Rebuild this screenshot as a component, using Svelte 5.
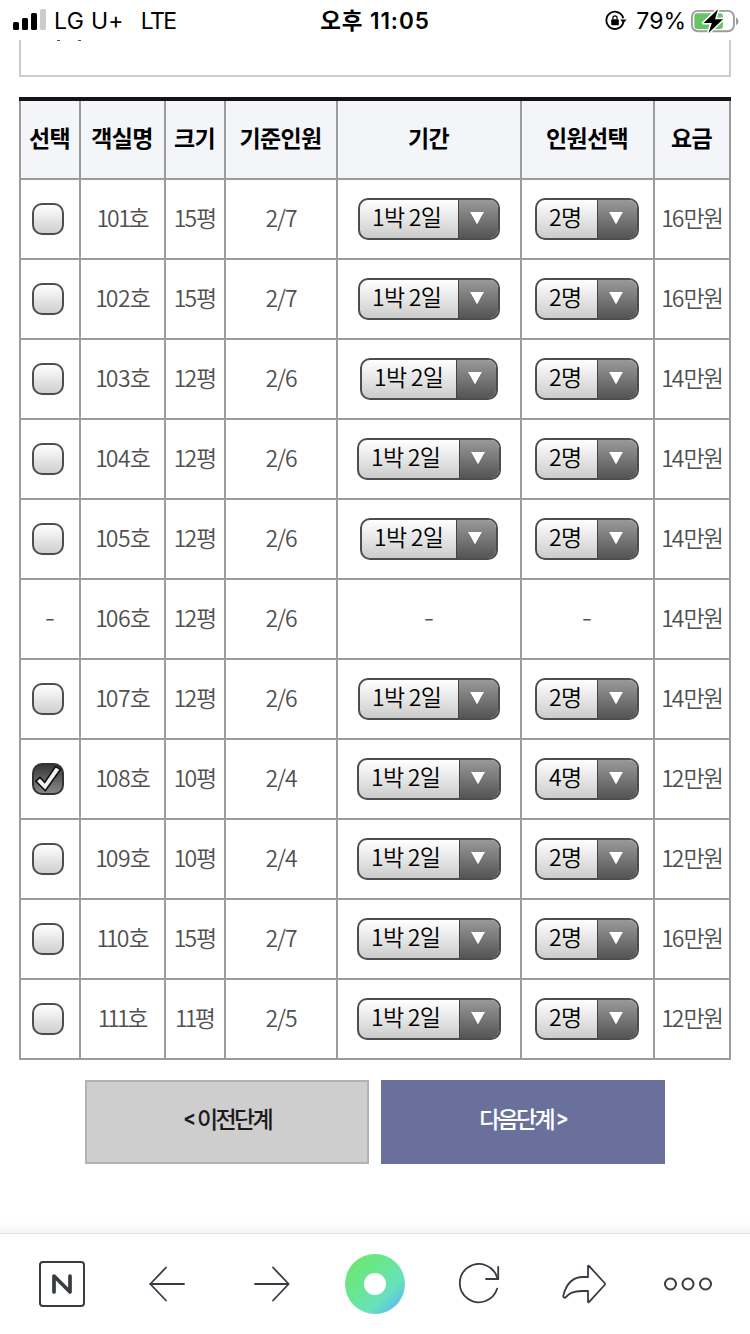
<script>
  const heads = ['선택', '객실명', '크기', '기준인원', '기간', '인원선택', '요금'];
  const rooms = [
    { no: '101', size: '15', cap: '2/7', w: 142, people: 2, price: '16' },
    { no: '102', size: '15', cap: '2/7', w: 142, people: 2, price: '16' },
    { no: '103', size: '12', cap: '2/6', w: 138, people: 2, price: '14' },
    { no: '104', size: '12', cap: '2/6', w: 144, people: 2, price: '14' },
    { no: '105', size: '12', cap: '2/6', w: 138, people: 2, price: '14' },
    { no: '106', size: '12', cap: '2/6', w: 0, people: 0, price: '14' },
    { no: '107', size: '12', cap: '2/6', w: 142, people: 2, price: '14' },
    { no: '108', size: '10', cap: '2/4', w: 144, people: 4, price: '12', checked: true },
    { no: '109', size: '10', cap: '2/4', w: 144, people: 2, price: '12' },
    { no: '110', size: '15', cap: '2/7', w: 144, people: 2, price: '16' },
    { no: '111', size: '11', cap: '2/5', w: 144, people: 2, price: '12' }
  ];
</script>

{#snippet label(digits, unit)}
  <span class="label">{#each digits as d}<span class:one={d === '1'}>{d}</span>{/each}<span class="unit">{unit}</span></span>
{/snippet}

{#snippet picker(text, width)}
  <div class="select" style:width="{width}px">
    <span class="value">{text}</span>
    <span class="drop"><svg width="14" height="14" viewBox="0 0 14 14"><path d="M0 1H14L7 13.5Z" fill="#444" opacity=".5"/><path d="M0 0H14L7 12.5Z" fill="#fff"/></svg></span>
  </div>
{/snippet}

<div class="screen">
  <header class="status">
    <div class="left">
      <svg width="34" height="22" viewBox="0 0 34 22">
        <rect x="0" y="13" width="6" height="8" rx="1.5"/>
        <rect x="9" y="9" width="6" height="12" rx="1.5"/>
        <rect x="18" y="4" width="6" height="17" rx="1.5"/>
        <rect x="27" y="0" width="6" height="21" rx="1.5" fill="#ccc"/>
      </svg>
      <span class="carrier">LG U+</span>
      <span class="net">LTE</span>
    </div>
    <div class="time">오후 11:05</div>
    <div class="right">
      <svg class="lock" width="22" height="22" viewBox="0 0 22 22">
        <path d="M18.3 12.5A8.6 8.6 0 1 1 18.3 8.2" fill="none" stroke="#000" stroke-width="1.8"/>
        <path d="M15.3 9.5H21.5L18.4 13.6Z"/>
        <rect x="6.2" y="9.3" width="7.6" height="6" rx="1"/>
        <path d="M7.9 9.5V7.9a2.1 2.1 0 0 1 4.2 0V9.5" fill="none" stroke="#000" stroke-width="1.2"/>
      </svg>
      <span class="pct">79%</span>
      <svg class="battery" width="49" height="24" viewBox="0 0 49 24">
        <rect x="1.9" y="1.9" width="42" height="20.4" rx="6" fill="#fff" stroke="#9c9c9c" stroke-width="1.9"/>
        <rect x="4.3" y="4.3" width="28.6" height="15.8" rx="3" fill="#65c466"/>
        <path d="M46 8.4q2.4 1 2.4 3.8t-2.4 3.8z" fill="#9c9c9c"/>
        <path d="M28 .3L13.6 13.9H21.8L18.5 24L33 10.2H25Z" stroke="#fff" stroke-width="3.2" paint-order="stroke" stroke-linejoin="round"/>
      </svg>
    </div>
  </header>

  <div class="notice"><i></i><i></i></div>

  <main>
    <div class="table">
      <div class="row head">
        {#each heads as h}<div class="cell">{h}</div>{/each}
      </div>
      {#each rooms as r}
        <div class="row">
          <div class="cell">
            {#if r.w}
              <div class="check" class:on={r.checked}>
                {#if r.checked}
                  <svg width="32" height="32" viewBox="0 0 32 32"><path d="M4 18.2L8 14.4L12.7 19.4L23.5 3.6L28.4 6.4L13.3 27.8Z" fill="#f2f2f2" stroke="#111" stroke-width="1.6"/></svg>
                {/if}
              </div>
            {:else}<span class="none">-</span>{/if}
          </div>
          <div class="cell">{@render label(r.no, '호')}</div>
          <div class="cell">{@render label(r.size, '평')}</div>
          <div class="cell cap">{r.cap}</div>
          <div class="cell">{#if r.w}{@render picker('1박 2일', r.w)}{:else}<span class="none">-</span>{/if}</div>
          <div class="cell people">{#if r.w}{@render picker(r.people + '명', 104)}{:else}<span class="none">-</span>{/if}</div>
          <div class="cell">{@render label(r.price, '만원')}</div>
        </div>
      {/each}
    </div>

    <div class="actions">
      <button class="prev"><b>&lt;</b>이전단계</button>
      <button class="next">다음단계<b>&gt;</b></button>
    </div>
  </main>

  <nav>
    <svg viewBox="0 0 60 60"><rect x="8" y="8" width="44" height="44" rx="3" stroke-width="2"/><path d="M22 38V22L38 38V22" stroke-width="3.7"/></svg>
    <svg viewBox="0 0 60 60"><path d="M47 30H13M29 13.5L13.3 30L29 46.5"/></svg>
    <svg viewBox="0 0 60 60"><path d="M13 30H46.5M31 13.5L46.7 30L31 46.5"/></svg>
    <svg viewBox="0 0 60 60">
      <defs><linearGradient id="orb" x1=".15" y1=".15" x2=".85" y2=".85"><stop offset="0" stop-color="#6be777"/><stop offset=".4" stop-color="#69e693"/><stop offset=".76" stop-color="#67e1bd"/><stop offset="1" stop-color="#5fc4e2"/></linearGradient></defs>
      <circle cx="30" cy="30" r="30" fill="url(#orb)" stroke="none"/><circle cx="30" cy="30" r="11" fill="#fff" stroke="none"/>
    </svg>
    <svg viewBox="0 0 60 60"><path d="M48.2 34.6A19.1 19.1 0 1 1 48.4 24.4"/><path d="M49.2 13V25H37" stroke-linejoin="miter"/></svg>
    <svg viewBox="0 0 60 60"><path d="M34 12.6Q34 11 35.2 12.2L50.6 29Q51.4 30 50.6 31L35.2 47.8Q34 49 34 47.4V37H28C19 37 15.5 39.5 12 43C10.5 44.5 9 43.5 9.3 41.6C12.5 29 20 23 29 23H34Z"/></svg>
    <svg viewBox="0 0 60 60"><g stroke-width="2"><circle cx="12.5" cy="30" r="5.5"/><circle cx="30" cy="30" r="5.5"/><circle cx="47.5" cy="30" r="5.5"/></g></svg>
  </nav>
</div>

<style>
  :global(body) { background: #fff; }
  * { box-sizing: border-box; }
  .screen { width: 750px; height: 1334px; display: flex; flex-direction: column; background: #fff; overflow: hidden; font-family: "Noto Sans CJK KR", sans-serif; }
  .status { height: 40px; flex: none; display: grid; grid-template-columns: 1fr 112px 1fr; align-items: center; font: 400 23px/40px Inter, "Noto Sans CJK KR", sans-serif; color: #000; white-space: nowrap; }
  .left, .right { display: flex; align-items: center; padding-top: 1px; }
  .left { padding-left: 13px; }
  .left svg { margin-top: -2px; }
  .carrier { margin-left: 7px; letter-spacing: .3px; }
  .net { margin-left: 17px; letter-spacing: -1.6px; }
  .time { font-weight: 600; font-size: 22.5px; text-align: center; letter-spacing: .9px; padding-top: 1px; }
  .right { justify-content: flex-end; padding-right: 11px; }
  .lock { margin-right: 9px; }
  .pct { margin-right: 4px; letter-spacing: 0; }

  .notice { flex: none; height: 37px; margin: 0 19px; border: 2px solid #ccc; border-top: 0; display: flex; gap: 18px; padding-left: 36px; }
  .notice i { width: 3px; height: 1px; background: #555; }

  main { flex: 1; padding: 20px 19px 0; background: linear-gradient(#fff 0 0) 0 0 / 100% calc(100% - 12px) no-repeat, linear-gradient(to top, #f5f7f7, #fff 12px); }
  .table { border-top: 4px solid #151316; font-size: 23px; color: #505050; }
  .row { display: grid; grid-template-columns: 62px 85px 60px 112px 184px 133px 76px; height: 80px; font-weight: 350; }
  .cell { display: flex; align-items: center; justify-content: center; border-right: 2px solid #9c9c9c; border-bottom: 2px solid #9c9c9c; white-space: nowrap; line-height: 36px; }
  .cell:first-child { border-left: 2px solid #9c9c9c; }
  .head { height: 79px; font-weight: 700; color: #000; letter-spacing: -.7px; }
  .head .cell { background: #f4f5f8; padding-bottom: 6px; padding-right: 1px; }
  .label { letter-spacing: -.5px; padding-bottom: 5px; }
  .label .one { margin: 0 -1.5px 0 -1px; }
  .unit { letter-spacing: -2px; margin-left: -.5px; }
  .cap { padding-bottom: 5px; letter-spacing: -1.1px; }
  .none { padding-bottom: 7px; transform: scaleX(1.25); }
  .people { padding-right: 1px; }

  .check { width: 32px; height: 32px; margin-right: 4px; border: 2px solid #4d4d4d; border-radius: 10px; background: linear-gradient(#fff, #cfcfcf); }
  .check.on { background: linear-gradient(#383838, #888); border-color: #333; }
  .check svg { display: block; margin: -2px; }

  .select { height: 42px; display: flex; border: 2px solid #4d4d4d; border-radius: 10px; overflow: hidden; background: linear-gradient(#fff, #ccc); color: #000; }
  .value { flex: 1; padding-left: 12px; line-height: 32px; letter-spacing: -.7px; }
  .drop { width: 40px; padding-right: 3px; border-left: 1px solid #444; background: linear-gradient(#999, #555); display: flex; align-items: center; justify-content: center; }

  .actions { display: flex; justify-content: center; gap: 12px; margin-top: 20px; }
  button { width: 284px; height: 84px; padding: 0 0 9px; font: 500 23px/36px "Noto Sans CJK KR", sans-serif; letter-spacing: -2.7px; border: 2px solid #b2b2b2; background: #cecece; color: #1c1c1c; }
  b { display: inline-block; font-weight: 700; transform: scaleX(.8); }
  .prev b { margin-right: 3px; }
  .next b { margin-left: 3px; }
  .next { background: #68709b; border-color: #68709b; color: #fff; }

  nav { flex: none; height: 101px; border-top: 1px solid #dfe4e3; padding: 20px 0 0 32px; display: grid; grid-template-columns: 105px 105px 103px 104px 105px 104px 60px; background: #fff; }
  nav svg { width: 60px; height: 60px; fill: none; stroke: #373b42; stroke-width: 1.8; stroke-linecap: round; stroke-linejoin: round; }
</style>
